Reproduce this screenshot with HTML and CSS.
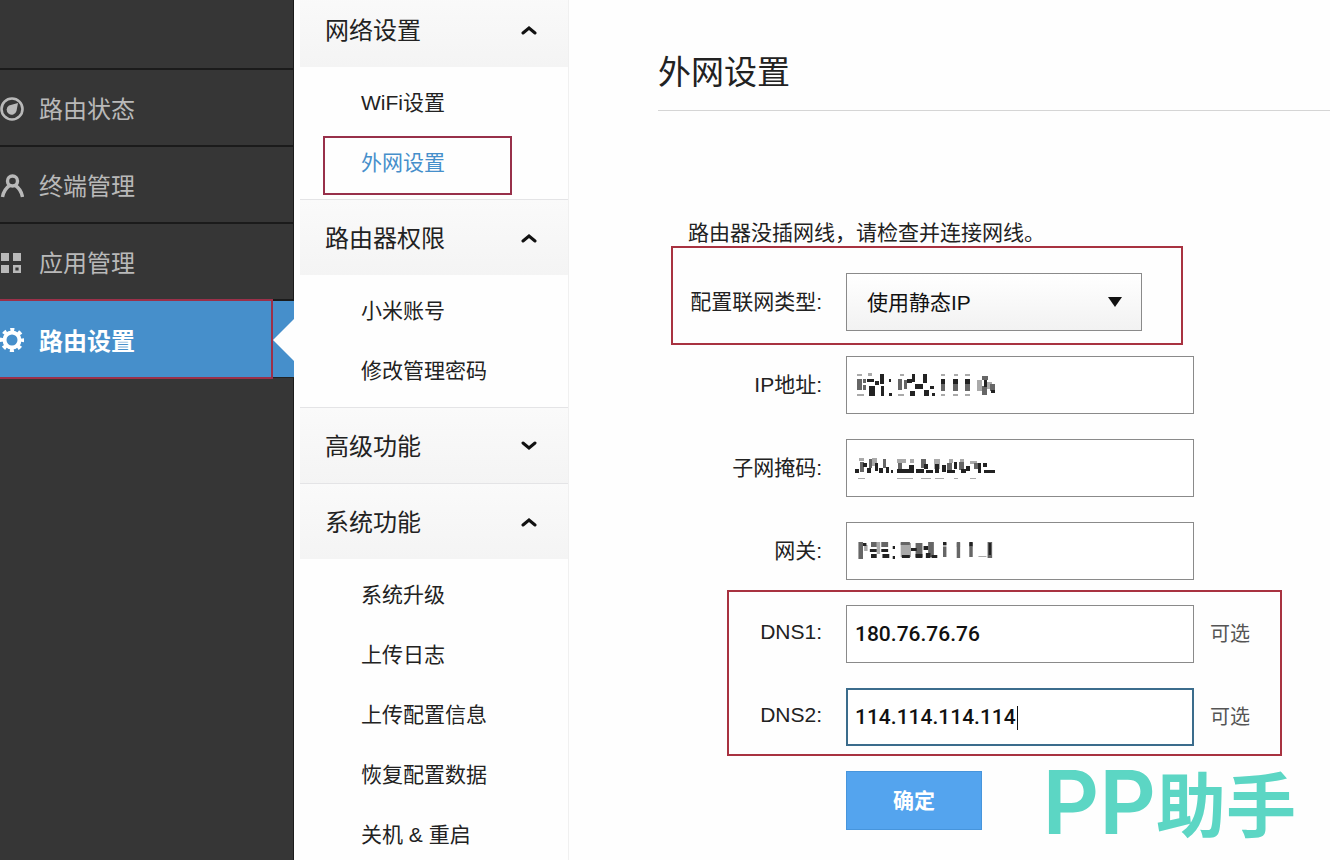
FILE: index.html
```html
<!DOCTYPE html>
<html lang="zh-CN">
<head>
  <meta charset="UTF-8">
  <title>外网设置</title>
  <link rel="stylesheet" href="styles.css">
</head>
<body>

  <nav class="sidebar">
    <a href="#" class="side-item">
      <svg class="side-icon" viewBox="0 0 24 24"><circle cx="12" cy="12" r="10.5" fill="none" stroke="currentColor" stroke-width="2.6"/><path d="M18 6 L16.500 14 A5 5 0 1 1 9 8.500 Z" fill="currentColor"/></svg>
      路由状态
    </a>
    <a href="#" class="side-item">
      <svg class="side-icon" viewBox="0 0 24 24" fill="none" stroke="currentColor" stroke-width="3.400"><circle cx="12.5" cy="7" r="5"/><path d="M2.500 23 C3.500 17 6 14 9.500 11.500 M15.500 11.500 C19 14 21.500 17 22.500 23"/></svg>
      终端管理
    </a>
    <a href="#" class="side-item">
      <svg class="side-icon" viewBox="0 0 24 24" fill="currentColor"><path d="M1 2h8v8H1zM13 2h8v8h-8zM1 14h8v8H1z"/><path d="M14.200 15.200h5.600v5.600h-5.600z" fill="none" stroke="currentColor" stroke-width="2.400"/></svg>
      应用管理
    </a>
    <a href="#" class="side-item active">
      <svg class="side-icon" viewBox="0 0 24 24"><circle cx="12" cy="12" r="7.500" fill="none" stroke="currentColor" stroke-width="4"/><circle cx="12" cy="12" r="10.300" fill="none" stroke="currentColor" stroke-width="3.600" stroke-dasharray="4 4.090" stroke-dashoffset="2"/></svg>
      路由设置
    </a>
  </nav>

  <nav class="menu">
    <button type="button" class="menu-title">网络设置
      <svg class="arrow" viewBox="0 0 16 10"><path d="M2 8 L8 3 L14 8"/></svg>
    </button>
    <div class="menu-list">
      <a href="#">WiFi设置</a>
      <a href="#" class="current">外网设置</a>
    </div>
    <button type="button" class="menu-title">路由器权限
      <svg class="arrow" viewBox="0 0 16 10"><path d="M2 8 L8 3 L14 8"/></svg>
    </button>
    <div class="menu-list">
      <a href="#">小米账号</a>
      <a href="#">修改管理密码</a>
    </div>
    <button type="button" class="menu-title">高级功能
      <svg class="arrow" viewBox="0 0 16 10"><path d="M2 2 L8 7 L14 2"/></svg>
    </button>
    <button type="button" class="menu-title">系统功能
      <svg class="arrow" viewBox="0 0 16 10"><path d="M2 8 L8 3 L14 8"/></svg>
    </button>
    <div class="menu-list">
      <a href="#">系统升级</a>
      <a href="#">上传日志</a>
      <a href="#">上传配置信息</a>
      <a href="#">恢复配置数据</a>
      <a href="#">关机 &amp; 重启</a>
    </div>
  </nav>

  <main class="main">
    <h1>外网设置</h1>

    <form class="form">
      <p class="notice">路由器没插网线，请检查并连接网线。</p>

      <div class="row mark-type">
        <label for="type">配置联网类型:</label>
        <div class="select-box">
          <select id="type">
            <option>使用静态IP</option>
          </select>
          <svg class="caret-down" viewBox="0 0 14 10"><path d="M0 0h14L7 10z"/></svg>
        </div>
      </div>

      <div class="row">
        <label for="ip">IP地址:</label>
        <div class="field">
          <input type="text" id="ip">
          <svg class="mosaic" viewBox="0 0 144 26">
            <g fill="#aaa"><path d="M2 2h5v2H2zM13 1h4v3h-4zM45 2h4v2h-4zM86 2h4v2h-4zM99 2h4v2h-4zM110 2h5v2h-5zM2 22h7v2H2zM43 22h6v2h-6zM86 22h4v2h-4zM98 22h5v2h-5zM110 22h5v2h-5zM122 8h5v11h-5zM132 10h5v7h-5z"/></g>
            <g fill="#666"><path d="M2 7h5v11H2zM8 7h3v4H8zM8 13h3v5H8zM43 7h4v11h-4zM49 8h3v9h-3zM86 12h4v7h-4zM98 12h5v7h-5zM110 12h5v7h-5zM127 4h6v4h-6zM127 14h5v9h-5zM135 12h5v7h-5z"/></g>
            <g fill="#222"><path d="M12 7h7v3h-7zM14 14h6v10h-6zM20 9h4v4h-4zM25 2h4v10h-4zM26 14h3v10h-3zM34 7h2v3h-2zM34 21h3v3h-3zM52 7h5v4h-5zM57 2h3v8h-3zM60 12h8v5h-8zM68 2h4v9h-4zM55 19h5v5h-5zM69 18h5v6h-5zM75 14h4v3h-4zM77 21h3v3h-3zM86 7h4v5h-4zM98 7h5v5h-5zM110 7h5v5h-5zM129 8h3v7h-3zM136 18h4v3h-4z"/></g>
          </svg>
        </div>
      </div>

      <div class="row">
        <label for="mask">子网掩码:</label>
        <div class="field">
          <input type="text" id="mask">
          <svg class="mosaic" viewBox="0 0 144 26">
            <g fill="#aaa"><path d="M4 3h5v3H4zM17 3h5v8h-5zM42 4h9v4h-9zM55 4h4v4h-4zM79 4h6v10h-6zM94 4h4v4h-4zM105 4h4v4h-4zM115 6h7v3h-7zM3 23h7v1H3zM42 23h16v1H42zM66 23h10v1H66zM80 23h9v1h-9zM99 23h4v1h-4zM115 23h6v1h-6z"/></g>
            <g fill="#666"><path d="M5 7h4v10H5zM14 4h3v9h-3zM28 4h3v9h-3zM43 8h4v8h-4zM66 4h5v9h-5zM92 8h5v7h-5zM104 7h5v8h-5zM119 8h4v6h-4z"/></g>
            <g fill="#222"><path d="M0 14h4v4H0zM8 8h4v4H8zM12 13h4v5h-4zM20 8h3v8h-3zM24 13h4v5h-4zM31 12h3v6h-3zM36 15h2v3h-2zM42 14h12v4H42zM54 10h5v8h-5zM61 14h8v4h-8zM69 9h4v5h-4zM71 15h7v3h-7zM80 9h4v9h-4zM87 10h4v7h-4zM92 15h8v3h-8zM99 7h3v7h-3zM106 14h5v4h-5zM111 11h4v5h-4zM123 8h3v10h-3zM128 8h4v4h-4zM129 15h11v3h-11z"/></g>
          </svg>
        </div>
      </div>

      <div class="row">
        <label for="gateway">网关:</label>
        <div class="field">
          <input type="text" id="gateway">
          <svg class="mosaic" viewBox="1 0 126 26" preserveAspectRatio="none">
            <g fill="#aaa"><path d="M9 7h3v6H9zM20 4h3v12h-3zM41 5h9v14h-9zM78 5h3v4h-3zM90 5h3v4h-3zM101 5h3v4h-3zM109 18h7v1h-7z"/></g>
            <g fill="#666"><path d="M4 4h4v17H4zM15 4h5v5h-5zM24 4h6v5h-6zM41 4h8v3h-8zM54 5h6v14h-6zM65 4h5v15h-5zM78 9h3v10h-3zM90 4h3v16h-3zM101 8h3v11h-3zM117 4h4v16h-4z"/></g>
            <g fill="#222"><path d="M8 5h3v3H8zM14 11h6v3h-6zM15 16h5v4h-5zM24 11h6v3h-6zM25 16h6v4h-6zM34 8h2v3h-2zM34 18h2v3h-2zM42 17h7v3h-7zM50 10h5v3h-5zM54 16h6v4h-6zM61 8h4v4h-4zM63 15h4v5h-4zM68 17h5v3h-5zM78 4h3v3h-3zM101 4h3v4h-3zM118 5h2v12h-2z"/></g>
          </svg>
        </div>
      </div>

      <div class="dns">
        <div class="row">
          <label for="dns1">DNS1:</label>
          <div class="field">
            <input type="text" id="dns1" value="180.76.76.76">
          </div>
          <span class="hint">可选</span>
        </div>
        <div class="row">
          <label for="dns2">DNS2:</label>
          <div class="field">
            <input type="text" id="dns2" class="editing" value="114.114.114.114">
            <span class="text-cursor"></span>
          </div>
          <span class="hint">可选</span>
        </div>
      </div>

      <button type="submit" class="submit">确定</button>
    </form>

    <div class="watermark"><span class="latin">PP</span>助手</div>
  </main>

</body>
</html>
```
FILE: styles.css
```css
*,
*::before,
*::after {
  box-sizing: border-box;
}

body {
  font-family: 'Liberation Sans', 'Noto Sans CJK SC', sans-serif;
  font-size: 21px;
  color: #222;
  background-color: #fefefe;
  display: flex;
  min-height: 100vh;
  margin: 0;
}

a {
  color: inherit;
  text-decoration: none;
}

button,
input,
select {
  font-family: inherit;
  font-size: 21px;
}

/* 左侧导航 */
.sidebar {
  flex: 0 0 294px;
  padding-top: 68px;
  background: #363636;
  border-right: 1px solid #1c1c1c;
}

.side-item {
  position: relative;
  display: flex;
  align-items: center;
  gap: 15px;
  height: 77px;
  border-top: 2px solid #1b1b1b;
  color: #b9b9b9;
  font-size: 24px;
}

.side-icon {
  width: 24px;
  height: 24px;
  margin-top: 2px;
}

.side-item.active {
  height: 79px;
  margin-right: -1px;
  background: #468fcb;
  color: #fff;
  font-weight: bold;
  border-bottom: 1px solid #222;
}

.side-item.active::before {
  content: "";
  position: absolute;
  top: -2px;
  bottom: -2px;
  left: 0;
  right: 21px;
  border: 2px solid #9c3049;
  border-left: none;
}

.side-item.active::after {
  content: "";
  position: absolute;
  right: 0;
  top: 18px;
  border: 21px solid transparent;
  border-left: none;
  border-right-color: #fefefe;
}

/* 二级菜单 */
.menu {
  flex: 0 0 275px;
  height: 100vh;
  padding-left: 6px;
  overflow: hidden;
  border-right: 1px solid #f0f0f0;
}

.menu-title {
  display: flex;
  align-items: center;
  justify-content: space-between;
  width: 100%;
  height: 76px;
  padding: 0 31px 3px 25px;
  border: none;
  border-top: 1px solid #e4e4e6;
  background: linear-gradient(#fafafa, #f4f4f4);
  color: #222;
  font-size: 24px;
}

.menu-title:first-child {
  margin-top: -9px;
}

.arrow {
  width: 16px;
  height: 10px;
  margin-top: 4px;
  fill: none;
  stroke: #111;
  stroke-width: 3;
  stroke-linecap: round;
}

.menu-list {
  padding: 6px 0;
}

.menu-list a {
  position: relative;
  display: block;
  padding-left: 61px;
  line-height: 60px;
}

.menu-list .current {
  color: #468fcb;
}

.menu-list .current::after {
  content: "";
  position: absolute;
  top: 3px;
  bottom: -2px;
  left: 23px;
  right: 56px;
  border: 2px solid #98304a;
}

/* 右侧内容 */
.main {
  position: relative;
  flex: 1;
  padding-left: 89px;
}

h1 {
  margin: 0;
  padding-top: 36px;
  border-bottom: 1px solid #d5d5d5;
  font-size: 33px;
  font-weight: normal;
  line-height: 74px;
}

.form {
  padding-top: 107px;
}

.notice {
  margin: 0 0 25px 30px;
  line-height: 30px;
}

.row {
  position: relative;
  display: flex;
  align-items: center;
  margin-bottom: 25px;
}

.row label {
  width: 188px;
  padding: 0 24px 4px 0;
  text-align: right;
  white-space: nowrap;
}

.field,
.select-box {
  position: relative;
  width: 348px;
}

.select-box {
  width: 296px;
}

.field input,
.select-box select {
  display: block;
  width: 100%;
  height: 58px;
  padding: 0 8px;
  border: 1px solid #8a8a8a;
  border-radius: 0;
  background: #fff;
  color: #111;
  outline: none;
}

.field input {
  font-family: Roboto, 'Liberation Sans', sans-serif;
  font-weight: 500;
}

.select-box select {
  appearance: none;
  padding: 0 20px;
  background: linear-gradient(#fff, #f2f2f2);
}

.caret-down {
  position: absolute;
  top: 24px;
  right: 20px;
  width: 14px;
  height: 10px;
  fill: #111;
  pointer-events: none;
}

.field .editing {
  border: 2px solid #3b6c8c;
  padding: 0 7px;
}

.text-cursor {
  position: absolute;
  top: 18px;
  left: 171px;
  width: 1px;
  height: 24px;
  background: #111;
}

/* 打码的地址 */
.mosaic {
  position: absolute;
  top: 16px;
  left: 9px;
  width: 144px;
  height: 26px;
  pointer-events: none;
}

.hint {
  margin-left: 16px;
  padding-bottom: 4px;
  font-size: 20px;
  color: #555;
}

/* 红框标注 */
.mark-type::after,
.dns::after {
  content: "";
  position: absolute;
  border: 2px solid #a83240;
  pointer-events: none;
}

.mark-type::after {
  top: -27px;
  bottom: -14px;
  left: 13px;
  width: 512px;
}

.dns {
  position: relative;
}

.dns::after {
  top: -15px;
  bottom: -10px;
  left: 69px;
  width: 555px;
}

.submit {
  display: block;
  width: 136px;
  height: 59px;
  margin-left: 188px;
  padding-bottom: 4px;
  border: 1px solid #4795dc;
  background: #54a4ee;
  color: #fff;
  font-weight: bold;
}

.watermark {
  position: absolute;
  right: 34px;
  bottom: 22px;
  display: flex;
  align-items: center;
  color: #5cd6c4;
  font-family: 'Noto Sans CJK SC', sans-serif;
  font-size: 70px;
  font-weight: bold;
  line-height: 72px;
}

.watermark .latin {
  font-family: Inter, sans-serif;
  font-size: 88px;
  font-weight: 600;
}
```
